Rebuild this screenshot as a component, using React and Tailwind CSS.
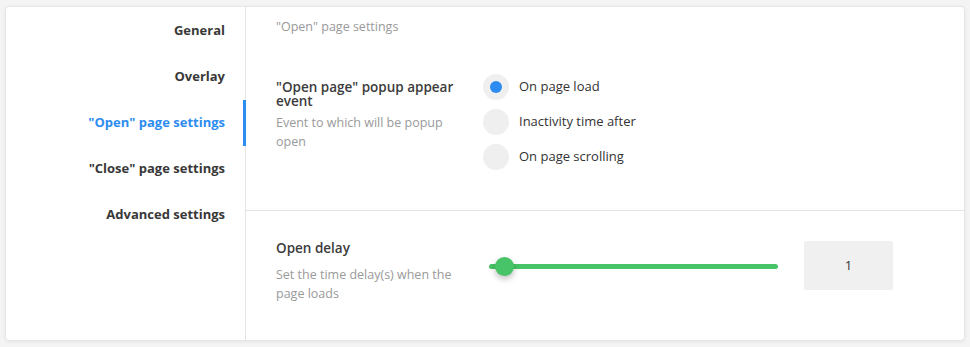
import { useState } from 'react'

const navItems = [
  'General',
  'Overlay',
  '"Open" page settings',
  '"Close" page settings',
  'Advanced settings',
]

const events = ['On page load', 'Inactivity time after', 'On page scrolling']

export default function App() {
  const [active, setActive] = useState(2)
  const [event, setEvent] = useState(0)

  return (
    <div
      className="min-h-screen bg-[#f4f4f4] pl-[5px] pr-[5px] pt-[6px]"
      style={{ fontFamily: '"Open Sans", "Noto Sans", sans-serif' }}
    >
      <div className="flex h-[335px] w-[960px] rounded-[4px] border border-[#e6e6e6] bg-white shadow-[0_1px_4px_rgba(0,0,0,0.06)]">
        {/* Side navigation */}
        <nav className="w-[240px] shrink-0 border-r border-[#e4e4e4] pt-[1px]">
          {navItems.map((item, i) => (
            <button
              key={item}
              onClick={() => setActive(i)}
              className={
                'relative flex h-[46px] w-full items-center justify-end pr-[20px] text-[13px] font-bold ' +
                (active === i ? 'text-[#2d8cf0]' : 'text-[#383838]')
              }
            >
              {item}
              {active === i && (
                <span className="absolute right-[-1px] top-0 h-full w-[3px] bg-[#2d8cf0]"></span>
              )}
            </button>
          ))}
        </nav>

        {/* Content */}
        <div className="flex-1">
          <div className="h-[41px] pl-[30px] pt-[10px] text-[12.5px] leading-[20px] text-[#999]">
            "Open" page settings
          </div>

          {/* Popup appear event */}
          <div className="flex h-[163px] border-b border-[#e4e4e4] pl-[30px] pt-[26px]">
            <div className="w-[207px] shrink-0 pt-[6px]">
              <div className="w-[185px] text-[13.5px] font-semibold leading-[14px] text-[#3b3b3b]">
                "Open page" popup appear event
              </div>
              <div className="mt-[5px] w-[180px] text-[12.5px] leading-[19px] text-[#9a9a9a]">
                Event to which will be popup open
              </div>
            </div>
            <div className="flex flex-col gap-[9px]">
              {events.map((label, i) => (
                <label
                  key={label}
                  className="flex cursor-pointer items-center gap-[10px]"
                  onClick={() => setEvent(i)}
                >
                  <span className="flex h-[26px] w-[26px] items-center justify-center rounded-full bg-[#efefef]">
                    {event === i && (
                      <span className="h-[12px] w-[12px] rounded-full bg-[#2d8cf0]"></span>
                    )}
                  </span>
                  <span className="text-[13px] text-[#333]">{label}</span>
                </label>
              ))}
            </div>
          </div>

          {/* Open delay */}
          <div className="flex items-start pl-[30px] pt-[30px]">
            <div className="w-[213px] shrink-0">
              <div className="text-[13.5px] font-semibold leading-[14px] text-[#3b3b3b]">
                Open delay
              </div>
              <div className="mt-[10px] w-[185px] text-[12.5px] leading-[19px] text-[#9a9a9a]">
                Set the time delay(s) when the page loads
              </div>
            </div>
            <div className="relative mt-[23px] h-[5px] w-[289px] rounded-full bg-[#47c467]">
              <span className="absolute left-[6px] top-[-7px] h-[19px] w-[19px] rounded-full bg-[#47c467] shadow-[0_3px_6px_rgba(0,0,0,0.25)]"></span>
            </div>
            <div className="ml-[26px] flex h-[49px] w-[89px] items-center justify-center rounded-[2px] bg-[#f0f0f0] text-[13px] text-[#333]">
              1
            </div>
          </div>
        </div>
      </div>
    </div>
  )
}
